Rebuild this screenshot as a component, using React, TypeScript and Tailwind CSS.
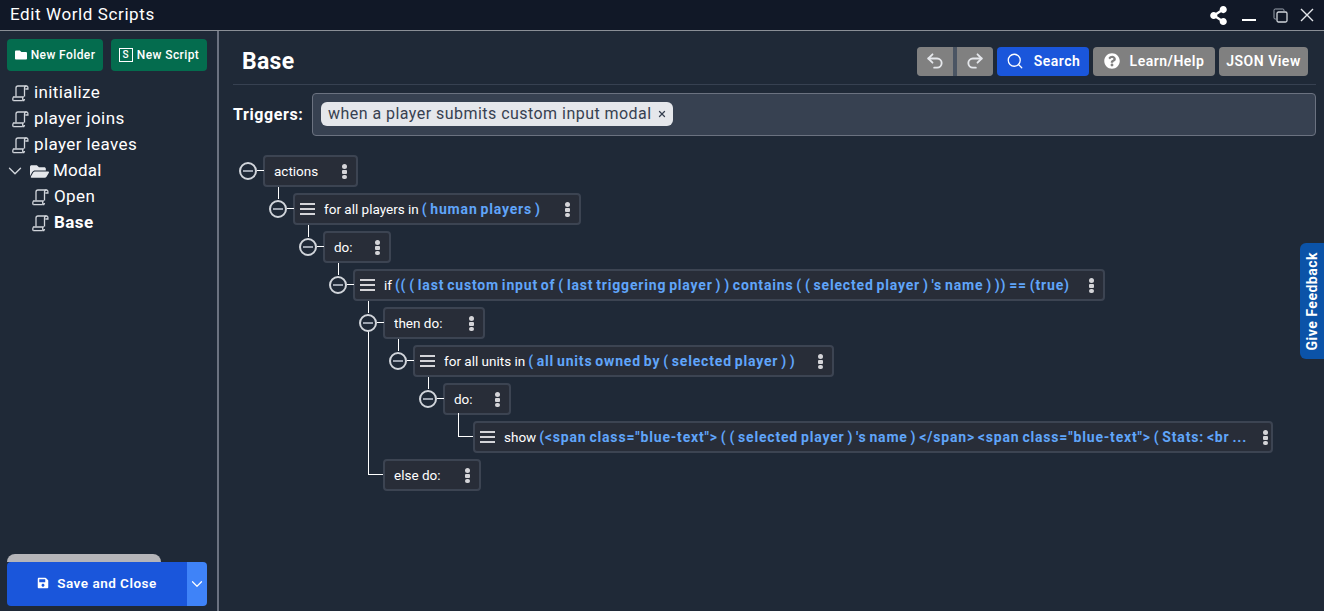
import type { ReactNode } from 'react';
import { ChevronDown, Redo2, Search, Undo2, X } from 'lucide-react';
import { FaFolder, FaFolderOpen, FaQuestionCircle, FaSave, FaShareAlt } from 'react-icons/fa';

function ScrollIcon() {
  return (
    <svg width="17" height="17" viewBox="0 0 17 17" fill="none" stroke="#d1d5db" strokeWidth="1.3" className="shrink-0">
      <path d="M4 11.5V3a2 2 0 0 1 2-2h8.5" />
      <path d="M12.5 11.5V3a2 2 0 0 1 2-2 1.4 1.4 0 0 1 1.4 1.4V4h-2.5" />
      <path d="M1.2 15.6c-.5-1-.4-2.6.2-3.6h9.8c-.6 1-.6 2.6 0 3.6H11c1 0 1.5-.6 1.5-1.6" />
      <path d="M1.2 15.6h9.6" />
    </svg>
  );
}

function Kebab() {
  return (
    <span className="flex w-[5px] shrink-0 flex-col gap-[1px]">
      <span className="h-[5px] w-[5px] rounded-full bg-[#d4d4d8]" />
      <span className="h-[4px] w-[5px] rounded-[1px] bg-[#d4d4d8]" />
      <span className="h-[4px] w-[5px] rounded-full bg-[#d4d4d8]" />
    </span>
  );
}

function Hamburger() {
  return (
    <span className="mr-[9px] flex w-[15px] shrink-0 flex-col gap-[3px]">
      <span className="h-[2px] w-full bg-[#d4d4d8]" />
      <span className="h-[2px] w-full bg-[#d4d4d8]" />
      <span className="h-[2px] w-full bg-[#d4d4d8]" />
    </span>
  );
}

function Toggle() {
  return (
    <span className="absolute top-[5px] left-[-26px] z-10 flex h-[18px] w-[18px] items-center justify-center rounded-full border-2 border-[#d1d5db] bg-[#1f2937]">
      <span className="h-[2px] w-[10px] bg-[#9ca3af]" />
      <span className="absolute top-[6px] left-[16px] h-[1px] w-[7px] bg-white" />
    </span>
  );
}

type BlockProps = {
  label?: string;
  blue?: ReactNode;
  drag?: boolean;
  width: string;
  toggle?: boolean;
  stem?: boolean;
  children?: ReactNode;
  tight?: boolean;
};

function Block({ label, blue, drag, width, toggle = true, stem = true, children, tight }: BlockProps) {
  return (
    <div className="flex flex-col gap-[6px]">
      <div
        className={`relative flex h-[32px] items-center rounded-[4px] border-2 border-[#3c4452] bg-[#282d38] text-[13.5px] text-white ${
          drag ? 'pl-[5px]' : 'pl-[9px]'
        } ${tight ? 'pr-[3px]' : 'pr-[9px]'} ${width}`}
      >
        {toggle && <Toggle />}
        {toggle && stem && <span className="absolute top-[-8px] left-[-17px] h-[12px] w-[1px] bg-white" />}
        {drag && <Hamburger />}
        <span className="min-w-0 flex-1 overflow-hidden whitespace-nowrap">
          {label}
          {blue && (
            <span className="text-[14px] font-bold tracking-[0.82px] text-[#60a5fa] [word-spacing:-1.4px]"> {blue}</span>
          )}
        </span>
        <span className="ml-1">
          <Kebab />
        </span>
      </div>
      {children && <div className="ml-[30px] flex flex-col gap-[6px]">{children}</div>}
    </div>
  );
}

function FileRow({ name, active, nested }: { name: string; active?: boolean; nested?: boolean }) {
  return (
    <div className={`flex h-[26px] items-center gap-[5px] ${nested ? 'pl-[32px]' : 'pl-[12px]'}`}>
      <ScrollIcon />
      <span className={`text-[17px] tracking-[0.4px] text-white ${active ? 'font-bold' : ''}`}>{name}</span>
    </div>
  );
}

function GrayButton({ children, className }: { children: ReactNode; className: string }) {
  return (
    <button
      className={`flex h-[29px] items-center justify-center rounded-[4px] bg-[#808080] text-[14px] font-semibold tracking-[0.5px] text-white ${className}`}
    >
      {children}
    </button>
  );
}

export default function App() {
  return (
    <div className="flex h-[611px] w-[1324px] flex-col overflow-hidden bg-[#1f2937] font-['Roboto',sans-serif] text-white">
      <header className="flex h-[31px] shrink-0 items-center justify-between border-b border-[#8a8f96] bg-[#111827] pr-[10px] pl-[10px]">
        <span className="-mt-[1px] text-[17px] tracking-[0.6px]">Edit World Scripts</span>
        <div className="flex items-center">
          <FaShareAlt size={19} />
          <span className="mt-[10px] ml-[14px] h-[2px] w-[14px] bg-white" />
          <svg width="15" height="15" viewBox="0 0 15 15" fill="none" className="ml-[17px]">
            <path d="M3 11H2.2A1.2 1.2 0 0 1 1 9.8V2.2A1.2 1.2 0 0 1 2.2 1h7.6A1.2 1.2 0 0 1 11 2.2V3" stroke="#9ca3af" />
            <rect x="4" y="4" width="10" height="10" rx="1.5" stroke="#d1d5db" strokeWidth="1.3" />
          </svg>
          <svg width="14" height="14" viewBox="0 0 14 14" stroke="#e5e7eb" strokeWidth="1.4" className="ml-[12px]">
            <path d="M1 1l12 12M13 1L1 13" />
          </svg>
        </div>
      </header>

      <div className="flex min-h-0 flex-1">
        <aside className="flex w-[219px] shrink-0 flex-col border-r-2 border-[#6b7280] pt-[8px] pb-[5px]">
          <div className="flex gap-[8px] px-[7px]">
            <button className="flex h-[32px] w-[96px] items-center justify-center gap-[4px] rounded-[4px] bg-[#046c4e] text-[12px] font-medium tracking-[0.4px]">
              <FaFolder size={12} />
              New Folder
            </button>
            <button className="flex h-[32px] w-[96px] items-center justify-center gap-[4px] rounded-[4px] bg-[#046c4e] text-[12px] font-medium tracking-[0.4px]">
              <span className="flex h-[14px] w-[14px] items-center justify-center border border-white text-[10px] leading-none">S</span>
              New Script
            </button>
          </div>
          <div className="mt-[9px] flex flex-col">
            <FileRow name="initialize" />
            <FileRow name="player joins" />
            <FileRow name="player leaves" />
            <div className="flex h-[26px] items-center pl-[4px]">
              <ChevronDown size={22} strokeWidth={1.5} className="text-[#d1d5db]" />
              <FaFolderOpen size={19} className="ml-[4px] text-[#e5e7eb]" />
              <span className="ml-[4px] text-[17px] tracking-[0.2px]">Modal</span>
            </div>
            <FileRow name="Open" nested />
            <FileRow name="Base" active nested />
          </div>
          <div className="mt-auto pr-[10px] pl-[7px]">
            <div className="h-[8px] w-[154px] rounded-t-full bg-[#b5b5b9]" />
            <div className="flex h-[44px] overflow-hidden rounded-[4px]">
              <button className="flex flex-1 items-center justify-center gap-[8px] bg-[#1a56db] pb-[2px] text-[13.5px] font-semibold tracking-[0.5px]">
                <FaSave size={12} />
                Save and Close
              </button>
              <button className="flex w-[20px] items-center justify-center bg-[#3f83f8]">
                <ChevronDown size={18} strokeWidth={1.6} />
              </button>
            </div>
          </div>
        </aside>

        <main className="relative min-w-0 flex-1 pr-[8px] pl-[14px]">
          <div className="flex h-[54px] items-center justify-between border-b border-[#374151] pt-[7px] pr-[8px] pl-[9px]">
            <h1 className="mt-[2px] text-[23px] font-bold tracking-[0.3px]">Base</h1>
            <div className="flex items-center gap-[4px]">
              <div className="flex gap-[4px] rounded-[4px] bg-[#4b5563]">
                <GrayButton className="w-[36px] rounded-r-none">
                  <Undo2 size={20} strokeWidth={2.2} className="text-[#e5e7eb]" />
                </GrayButton>
                <GrayButton className="w-[36px] rounded-l-none">
                  <Redo2 size={20} strokeWidth={2.2} className="text-[#e5e7eb]" />
                </GrayButton>
              </div>
              <button className="flex h-[29px] w-[92px] items-center justify-center gap-[10px] rounded-[4px] bg-[#1a56db] text-[14px] font-semibold tracking-[0.5px]">
                <Search size={18} strokeWidth={1.7} />
                Search
              </button>
              <GrayButton className="w-[122px] gap-[10px]">
                <FaQuestionCircle size={16} />
                Learn/Help
              </GrayButton>
              <GrayButton className="w-[89px]">JSON View</GrayButton>
            </div>
          </div>

          <div className="mt-[8px] flex items-center gap-[8px]">
            <span className="w-[71px] text-[16px] font-bold tracking-[0.6px] whitespace-nowrap">Triggers:</span>
            <div className="flex h-[43px] flex-1 items-center rounded-[4px] border border-[#6b7280] bg-[#374151] pl-[8px]">
              <span className="-mt-[1px] flex h-[24px] items-center gap-[5px] rounded-[6px] bg-[#e5e7eb] pr-[6px] pb-[1px] pl-[7px] text-[16px] tracking-[0.46px] text-[#374151]">
                when a player submits custom input modal
                <X size={10} strokeWidth={3} />
              </span>
            </div>
          </div>

          <div className="mt-[19px] ml-[30px]">
            <Block label="actions" width="w-[95px]" stem={false}>
              <Block label="for all players in" blue="( human players )" drag width="w-[288px]">
                <Block label="do:" width="w-[68px]">
                  <Block
                    label="if"
                    blue="(( ( last custom input of ( last triggering player ) ) contains ( ( selected player ) 's name ) )) == (true)"
                    drag
                    width="w-[752px]"
                  >
                    <Block label="then do:" width="w-[102px]">
                      <Block label="for all units in" blue="( all units owned by ( selected player ) )" drag width="w-[421px]">
                        <Block label="do:" width="w-[68px]">
                          <div className="relative">
                            <span className="absolute top-[-8px] left-[-15px] h-[24px] w-[15px] border-b border-l border-white" />
                            <Block
                              label="show"
                              blue={'(<span class="blue-text"> ( ( selected player ) \'s name ) </span> <span class="blue-text"> ( Stats: <br ...'}
                              drag
                              toggle={false}
                              tight
                              width="w-[800px]"
                            />
                          </div>
                        </Block>
                      </Block>
                    </Block>
                    <div className="relative">
                      <span className="absolute top-[-142px] left-[-15px] h-[158px] w-[15px] border-b border-l border-white" />
                      <Block label="else do:" width="w-[98px]" toggle={false} />
                    </div>
                  </Block>
                </Block>
              </Block>
            </Block>
          </div>

          <div className="absolute top-[212px] right-0 flex h-[116px] w-[24px] items-center justify-center rounded-l-[6px] bg-[#0b53a8] pl-[1px]">
            <span className="rotate-180 text-[14px] font-bold tracking-[0.5px] whitespace-nowrap [writing-mode:vertical-rl]">Give Feedback</span>
          </div>
        </main>
      </div>
    </div>
  );
}
